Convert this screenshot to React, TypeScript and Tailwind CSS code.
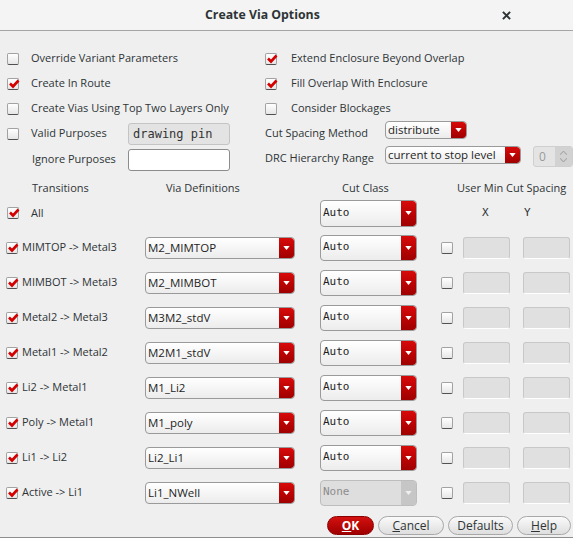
import React from "react";

const font = { fontFamily: '"Open Sans", "DejaVu Sans", sans-serif' };
const mono = { fontFamily: '"DejaVu Sans Mono", monospace', fontSize: 11 };

function Check({ on }: { on?: boolean }) {
  return (
    <span className="relative inline-block h-[12px] w-[12px] shrink-0 rounded-[2px] border border-[#a2a2a2] border-b-[#505050] bg-gradient-to-b from-white to-[#e6e6e6]">
      {on && (
        <svg viewBox="0 0 12 12" className="absolute left-[0px] top-[-1px] h-[12px] w-[12px]">
          <path d="M2 5.5 L5 8.5 L10.5 2.5" fill="none" stroke="#d40000" strokeWidth="2.6" />
        </svg>
      )}
    </span>
  );
}

function Select({
  text,
  w,
  h,
  isMono,
  disabled,
}: {
  text: string;
  w: number;
  h: number;
  isMono?: boolean;
  disabled?: boolean;
}) {
  return (
    <div
      className={
        "flex shrink-0 items-stretch overflow-hidden rounded-[4px] border " +
        (disabled
          ? "border-[#bdbdbd] bg-[#dedede] text-[#8c8c8c]"
          : "border-[#9a9a9a] bg-gradient-to-b from-white to-[#ececec] text-[#1e1e1e]")
      }
      style={{ width: w, height: h }}
    >
      <span className="flex flex-1 items-center pl-[2px] text-[11.5px]" style={isMono ? mono : undefined}>
        {text}
      </span>
      {disabled ? (
        <span className="flex h-full w-[15px] items-center justify-center bg-[#c6c6c6]">
          <svg viewBox="0 0 8 5" className="h-[4px] w-[7px]">
            <path d="M0 0 H8 L4 5 Z" fill="#efefef" />
          </svg>
        </span>
      ) : (
        <span className="flex h-full w-[15px] shrink-0 items-center justify-center rounded-r-[3px] bg-gradient-to-b from-[#d80a0a] to-[#a00000]">
          <svg viewBox="0 0 8 5" className="h-[4px] w-[7px]">
            <path d="M0 0 H8 L4 5 Z" fill="#fff" />
          </svg>
        </span>
      )}
    </div>
  );
}

function Field() {
  return <div className="h-[22px] w-[47px] shrink-0 rounded-[3px] border border-[#c8c8c8] border-b-white bg-[#e0e0e0]" />;
}

const rows = [
  ["MIMTOP -> Metal3", "M2_MIMTOP"],
  ["MIMBOT -> Metal3", "M2_MIMBOT"],
  ["Metal2 -> Metal3", "M3M2_stdV"],
  ["Metal1 -> Metal2", "M2M1_stdV"],
  ["Li2 -> Metal1", "M1_Li2"],
  ["Poly -> Metal1", "M1_poly"],
  ["Li1 -> Li2", "Li2_Li1"],
  ["Active -> Li1", "Li1_NWell"],
];

export default function App() {
  return (
    <div
      className="flex h-[538px] w-[573px] flex-col overflow-hidden border-b border-[#8e8e8e] bg-[#efefef] text-[11px] text-[#2e3436]"
      style={font}
    >
      <div className="flex h-[31px] shrink-0 items-center border-b border-[#a5a5a3] bg-[#f4f4f4]">
        <span className="ml-[205px] w-[297px] text-[12.3px] font-bold text-[#2e3436]">Create Via Options</span>
        <svg viewBox="0 0 10 10" className="h-[9px] w-[9px]">
          <path d="M1 1 L9 9 M9 1 L1 9" stroke="#2e3436" strokeWidth="2.2" />
        </svg>
      </div>

      <div className="grid grid-cols-[258px_1fr] pl-[7px] pt-[15px]">
        <div className="flex flex-col">
          <div className="flex h-[25px] items-center gap-[12px]">
            <Check />
            <span>Override Variant Parameters</span>
          </div>
          <div className="flex h-[25px] items-center gap-[12px]">
            <Check on />
            <span>Create In Route</span>
          </div>
          <div className="flex h-[25px] items-center gap-[12px]">
            <Check />
            <span>Create Vias Using Top Two Layers Only</span>
          </div>
          <div className="flex h-[25px] items-center">
            <Check />
            <span className="ml-[12px] w-[97px]">Valid Purposes</span>
            <div className="flex h-[22px] w-[102px] items-center rounded-[3px] border border-[#c4c4c4] bg-[#e3e3e3] pl-[4px] text-[#333]" style={{ ...mono, fontSize: 12 }}>
              drawing pin
            </div>
          </div>
          <div className="flex h-[25px] items-center pl-[25px] pt-[2px]">
            <span className="w-[96px]">Ignore Purposes</span>
            <div className="h-[22px] w-[102px] rounded-[3px] border border-[#8c8c8c] bg-white" />
          </div>
        </div>
        <div className="flex flex-col">
          <div className="flex h-[25px] items-center gap-[14px]">
            <Check on />
            <span>Extend Enclosure Beyond Overlap</span>
          </div>
          <div className="flex h-[25px] items-center gap-[14px]">
            <Check on />
            <span>Fill Overlap With Enclosure</span>
          </div>
          <div className="flex h-[25px] items-center gap-[14px]">
            <Check />
            <span>Consider Blockages</span>
          </div>
          <div className="flex h-[25px] items-start">
            <span className="w-[120px] pt-[4px]">Cut Spacing Method</span>
            <Select text="distribute" w={82} h={18} />
          </div>
          <div className="flex h-[25px] items-start">
            <span className="w-[120px] pt-[4px]">DRC Hierarchy Range</span>
            <Select text="current to stop level" w={136} h={18} />
            <div className="ml-[12px] flex h-[21px] w-[40px] overflow-hidden rounded-[3px] border border-[#cfcfcf] bg-[#e4e4e4]">
              <span className="flex flex-1 items-center pl-[5px] text-[12px] text-[#9a9a9a]">0</span>
              <span className="flex w-[17px] flex-col items-center justify-center gap-[3px] bg-[#d2d2d2]">
                <svg viewBox="0 0 8 4" className="h-[4px] w-[7px]">
                  <path d="M0 4 L4 0 L8 4" fill="none" stroke="#a8a8a8" strokeWidth="1.2" />
                </svg>
                <svg viewBox="0 0 8 4" className="h-[4px] w-[7px]">
                  <path d="M0 0 L4 4 L8 0" fill="none" stroke="#a8a8a8" strokeWidth="1.2" />
                </svg>
              </span>
            </div>
          </div>
        </div>
      </div>

      <div className="mt-[5px] flex h-[24px] items-center whitespace-nowrap">
        <span className="ml-[32px] w-[134px]">Transitions</span>
        <span className="w-[176px]">Via Definitions</span>
        <span className="w-[115px]">Cut Class</span>
        <span>User Min Cut Spacing</span>
      </div>

      <div className="flex h-[26px] items-center pl-[7px]">
        <Check on />
        <span className="ml-[12px] w-[289px]">All</span>
        <Select text="Auto" w={97} h={27} isMono />
        <span className="ml-[65px] w-[42px]" style={mono}>X</span>
        <span style={mono}>Y</span>
      </div>

      <div className="mt-[4px] flex flex-col">
        {rows.map(([t, v], i) => (
          <div key={t} className="flex h-[35px] items-center pl-[6px]">
            <Check on />
            <span className="ml-[4px] w-[123px]">{t}</span>
            <Select text={v} w={150} h={22} />
            <span className="w-[25px]" />
            <Select text={i === rows.length - 1 ? "None" : "Auto"} w={97} h={26} isMono disabled={i === rows.length - 1} />
            <span className="w-[24px]" />
            <Check />
            <span className="w-[10px]" />
            <Field />
            <span className="w-[13px]" />
            <Field />
          </div>
        ))}
      </div>

      <div className="mt-[6px] flex items-center justify-end gap-[4px] pr-[2px]">
        <button className="flex h-[19px] w-[47px] items-center justify-center rounded-full border border-[#8a0000] bg-gradient-to-b from-[#d41010] to-[#a00000] text-[12px] font-bold text-white">
          <span><u>O</u>K</span>
        </button>
        <button className="flex h-[19px] w-[66px] items-center justify-center rounded-full border border-[#a8a8a8] bg-gradient-to-b from-[#fafafa] to-[#dedede] text-[12px] text-[#2e3436]">
          <span><u>C</u>ancel</span>
        </button>
        <button className="flex h-[19px] w-[65px] items-center justify-center rounded-full border border-[#a8a8a8] bg-gradient-to-b from-[#fafafa] to-[#dedede] text-[12px] text-[#2e3436]">
          Defaults
        </button>
        <button className="flex h-[19px] w-[54px] items-center justify-center rounded-full border border-[#a8a8a8] bg-gradient-to-b from-[#fafafa] to-[#dedede] text-[12px] text-[#2e3436]">
          <span><u>H</u>elp</span>
        </button>
      </div>
    </div>
  );
}
